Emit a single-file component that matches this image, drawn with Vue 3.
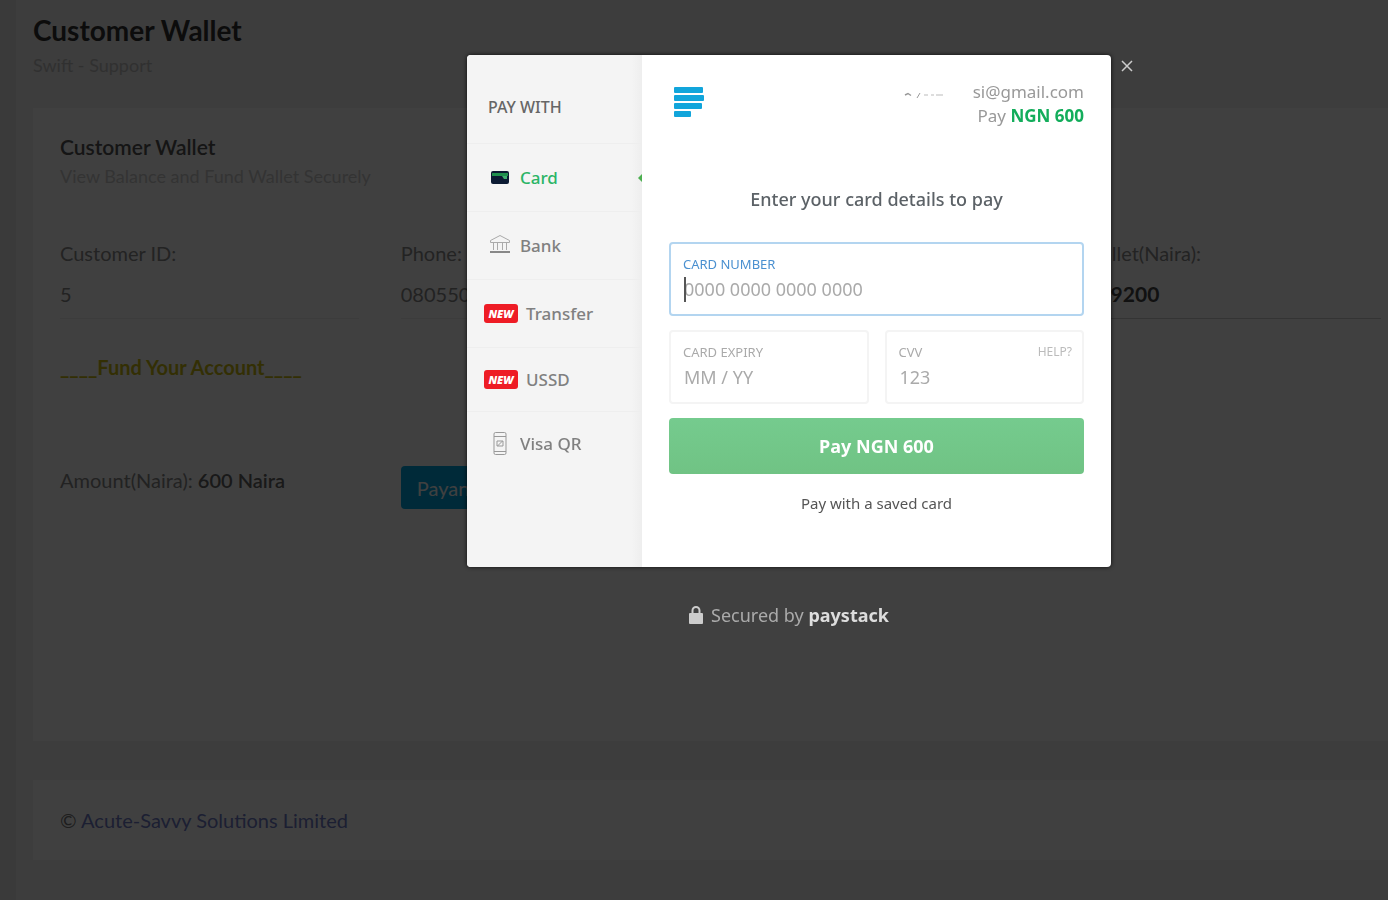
<template>
  <div class="page">
    <main class="content">
      <header class="page-head">
        <h1>Customer Wallet</h1>
        <p>Swift - Support</p>
      </header>

      <section class="card wallet">
        <h2>Customer Wallet</h2>
        <p class="hint">View Balance and Fund Wallet Securely</p>

        <div class="grid fields">
          <div v-for="f in fields" :key="f.id" class="field" :class="{ last: f.last }">
            <label :for="f.id">{{ f.label }}</label>
            <input :id="f.id" type="text" :value="f.value" readonly />
          </div>
        </div>

        <p class="fund">____Fund Your Account____</p>

        <div class="grid amount-row">
          <p class="amount">Amount(Naira): <b>600 Naira</b></p>
          <button type="button" class="pay-now" @click="open = true">Payant Now</button>
        </div>
      </section>

      <footer class="card footer">
        © <a href="#">Acute-Savvy Solutions Limited</a>
      </footer>
    </main>

    <div v-if="open" class="overlay">
      <div class="modal" role="dialog" aria-label="Payment">
        <nav class="channels">
          <h3>PAY WITH</h3>
          <button
            v-for="c in channels"
            :key="c.name"
            type="button"
            class="channel"
            :class="{ active: c.name === channel, short: c.short }"
            @click="channel = c.name"
          >
            <span v-if="c.isNew" class="badge">NEW</span>
            <svg v-else-if="c.name === 'Card'" width="24" height="24" viewBox="0 0 24 24">
              <rect x="3" y="5" width="18" height="13" rx="2" fill="#0b1a33" />
              <rect x="4" y="7" width="16" height="3" fill="#1f8f4e" />
              <path d="M14 10h5v3h-3z" fill="#3fae70" />
            </svg>
            <svg v-else-if="c.name === 'Bank'" width="24" height="24" viewBox="0 0 24 24" fill="none" stroke="#aaa">
              <path d="M2.500 8.500V6.500L12 1.500 21.500 6.500v2zM5.500 8v8M9.500 8v8M14.500 8v8M18.500 8v8" />
              <path d="M2 18h20" stroke="#888" stroke-width="2" />
            </svg>
            <svg v-else width="24" height="24" viewBox="0 0 24 24" fill="none" stroke="#999">
              <rect x="6" y="0.500" width="12" height="22" rx="1.500" />
              <path d="M6 4.500h12M6 19.500h12M9 14V9h6v5zM9.500 14l5-5" />
            </svg>
            <span>{{ c.name }}</span>
          </button>
        </nav>

        <div class="checkout">
          <div class="top">
            <svg class="logo" width="32" height="32" viewBox="0 0 32 32" fill="#11a5db">
              <rect x="1" y="0" width="29" height="6" rx="1" />
              <rect x="1" y="8" width="30" height="6" rx="1" />
              <rect x="1" y="16" width="28" height="6" rx="1" />
              <rect x="1" y="24" width="17" height="6" rx="1" />
            </svg>
            <div class="payer">
              <div class="email">
                <svg width="40" height="12" viewBox="0 0 40 12" fill="none" stroke="#999">
                  <path d="M1 9l3-1.500l3 2" stroke-width="1.500" />
                  <path d="M13 12l3-5" />
                  <path d="M20 9h4M27 9h3M32 9h7" stroke="#bbb" />
                </svg>
                <span>si@gmail.com</span>
              </div>
              <div>Pay <b>NGN 600</b></div>
            </div>
          </div>

          <p class="lead">Enter your card details to pay</p>

          <form @submit.prevent>
            <div class="box focused">
              <label for="number">CARD NUMBER</label>
              <input id="number" v-model="number" type="text" placeholder="0000 0000 0000 0000" />
              <i v-if="!number" class="caret"></i>
            </div>
            <div class="row">
              <div class="box">
                <label for="expiry">CARD EXPIRY</label>
                <input id="expiry" type="text" placeholder="MM / YY" />
              </div>
              <div class="box">
                <div class="labels">
                  <label for="cvv">CVV</label>
                  <a href="#">HELP?</a>
                </div>
                <input id="cvv" type="text" placeholder="123" />
              </div>
            </div>
            <button type="submit" class="submit">Pay NGN 600</button>
          </form>

          <a href="#" class="saved">Pay with a saved card</a>
        </div>

        <button type="button" class="close" aria-label="Close" @click="open = false">
          <svg width="12" height="12" viewBox="0 0 12 12" stroke="#ccc" stroke-width="1.500">
            <path d="M1 1l10 10M11 1L1 11" />
          </svg>
        </button>
      </div>

      <div class="secured">
        <svg width="14" height="20" viewBox="0 0 14 20">
          <path d="M3.500 9V5.500a3.500 3.500 0 0 1 7 0V9" fill="none" stroke="#ccc" stroke-width="2" />
          <rect x="0" y="8" width="14" height="11" rx="1" fill="#ccc" />
        </svg>
        <span>Secured by <b>paystack</b></span>
      </div>
    </div>
  </div>
</template>

<script setup>
import { ref } from 'vue'

const open = ref(true)
const channel = ref('Card')
const number = ref('')

const fields = [
  { id: 'customer', label: 'Customer ID:', value: '5' },
  { id: 'phone', label: 'Phone:', value: '08055000000' },
  { id: 'balance', label: 'Wallet(Naira):', value: 'N19200', last: true }
]

const channels = [
  { name: 'Card' },
  { name: 'Bank' },
  { name: 'Transfer', isNew: true },
  { name: 'USSD', isNew: true, short: true },
  { name: 'Visa QR', short: true }
]
</script>

<style>
body {
  margin: 0;
  background: #f2f2f2;
}
</style>

<style scoped>
* {
  box-sizing: border-box;
}

h1,
h2,
h3,
p {
  margin: 0;
}

button,
input {
  font-family: inherit;
}

.page {
  min-height: 100vh;
  padding-left: 16px;
  background: #e8e8e8;
  font-family: Lato, "Liberation Sans", sans-serif;
  color: #777;
  overflow: hidden;
}

.content {
  min-height: 100vh;
  padding: 12px 0 40px 17px;
  background: #f2f2f2;
}

.page-head {
  height: 96px;
}

h1 {
  font-size: 28px;
  line-height: 36px;
  font-weight: 700;
  color: #333;
}

.page-head p {
  margin-top: 7px;
  font-size: 18px;
  line-height: 20px;
  color: #c0c0c0;
}

.card {
  padding: 26px 7px 26px 27px;
  background: #fff;
}

.wallet {
  min-height: 633px;
}

h2 {
  font-size: 21px;
  line-height: 26px;
  font-weight: 600;
  color: #555;
}

.hint {
  margin-top: 6px;
  font-size: 18px;
  line-height: 20px;
  color: #ccc;
}

.grid {
  display: grid;
  grid-template-columns: repeat(4, 1fr);
  column-gap: 42px;
}

.fields {
  margin-top: 55px;
}

.field.last {
  grid-column: 4;
}

.field label {
  display: block;
  font-size: 20px;
  line-height: 24px;
  color: #8c8c8c;
}

.field input {
  width: 100%;
  height: 48px;
  margin-top: 6px;
  padding: 0 0 2px;
  border: 0;
  border-bottom: 1px solid #eee;
  background: none;
  font-size: 20px;
  color: #888;
}

.field.last input {
  border-color: #d0d0d0;
  font-size: 21px;
  font-weight: 700;
  color: #444;
}

.fund {
  margin-top: 36px;
  font-size: 20px;
  line-height: 24px;
  font-weight: 700;
  color: #cabc10;
}

.amount-row {
  margin-top: 87px;
}

.amount {
  padding-top: 2px;
  font-size: 20px;
  line-height: 24px;
  color: #888;
}

.amount b {
  font-weight: 600;
  color: #666;
}

.pay-now {
  justify-self: start;
  height: 43px;
  padding: 0 16px;
  border: 0;
  border-radius: 4px;
  background: #00a8e4;
  font-size: 20px;
  color: #fff;
}

.footer {
  margin-top: 39px;
  font-size: 20px;
  line-height: 28px;
}

.footer a {
  color: #6f7bc8;
  text-decoration: none;
}

.overlay {
  position: fixed;
  inset: 0;
  display: flex;
  flex-direction: column;
  align-items: center;
  padding: 55px 0 0 190px;
  background: rgba(0, 0, 0, 0.75);
  font-family: "Noto Sans", "Open Sans", sans-serif;
}

.modal {
  position: relative;
  display: flex;
  width: 100%;
  max-width: 644px;
  min-height: 512px;
  border-radius: 4px;
  background: #fff;
  box-shadow: 0 0 4px rgba(0, 0, 0, 0.8);
}

.channels {
  flex: 0 0 175px;
  border-radius: 4px 0 0 4px;
  background: linear-gradient(to right, #f4f4f4 94%, #eee);
}

h3 {
  height: 88px;
  padding: 16px 0 0 21px;
  font-size: 16px;
  line-height: 73px;
  font-weight: 500;
  color: #666;
}

.channel {
  display: flex;
  align-items: center;
  gap: 8px;
  width: 100%;
  height: 68px;
  padding: 0 0 0 21px;
  border: 0;
  border-top: 1px solid #eee;
  background: none;
  font-size: 17px;
  font-weight: 500;
  color: #808080;
}

.channel.short {
  height: 64px;
}

.channel.active {
  color: #2bb566;
}

/* notch pointing at the open panel */
.channel.active::after {
  content: "";
  margin-left: auto;
  border: 4px solid transparent;
  border-right-color: #4caf50;
  border-left: 0;
}

.badge {
  width: 34px;
  margin-left: -4px;
  border-radius: 3px;
  background: #ee1c25;
  font-size: 11px;
  line-height: 19px;
  font-weight: 900;
  font-style: italic;
  color: #fff;
  text-align: center;
}

.checkout {
  flex: 1;
  padding: 25px 27px 40px;
  text-align: center;
}

.top {
  display: flex;
  justify-content: space-between;
}

.logo {
  margin: 7px 0 0 4px;
}

.payer {
  font-size: 17px;
  line-height: 24px;
  text-align: right;
  color: #999;
}

.payer b {
  color: #13ad5b;
}

.email {
  display: flex;
  align-items: center;
  gap: 29px;
}

.lead {
  margin-top: 59px;
  font-size: 18px;
  line-height: 24px;
  font-weight: 500;
  color: #5c6267;
}

form {
  display: grid;
  gap: 14px;
  margin-top: 31px;
}

.row {
  display: grid;
  grid-template-columns: 1fr 1fr;
  gap: 16px;
}

.box {
  position: relative;
  height: 74px;
  padding: 12px 10px 0 12px;
  border: 2px solid #f4f4f4;
  border-radius: 4px;
  text-align: left;
}

.box.focused {
  border-color: #b3d5f0;
}

.box label,
.labels a {
  display: block;
  font-size: 13px;
  line-height: 16px;
  color: #aaa;
  text-decoration: none;
}

.box.focused label {
  color: #4a90d0;
}

.labels {
  display: flex;
  justify-content: space-between;
}

.labels a {
  font-size: 12px;
  color: #bbb;
}

.box input {
  display: block;
  width: 100%;
  height: 34px;
  padding: 0 0 0 1px;
  border: 0;
  outline: 0;
  background: none;
  font-size: 18px;
  color: #555;
}

.box input::placeholder {
  color: #aaa;
}

.caret {
  position: absolute;
  top: 33px;
  left: 13px;
  width: 2px;
  height: 25px;
  background: #555;
}

.submit {
  height: 56px;
  border: 0;
  border-radius: 4px;
  background: linear-gradient(#75cb8e, #70c384);
  font-size: 18px;
  font-weight: 700;
  color: #fff;
}

.saved {
  display: block;
  margin-top: 17px;
  font-size: 15px;
  line-height: 24px;
  color: #555;
  text-decoration: none;
}

.close {
  position: absolute;
  top: 5px;
  right: -22px;
  display: flex;
  padding: 0;
  border: 0;
  background: none;
}

.secured {
  display: flex;
  align-items: center;
  gap: 8px;
  margin-top: 36px;
  font-size: 18px;
  line-height: 24px;
  color: #aaa;
}

.secured b {
  color: #ddd;
}
</style>
